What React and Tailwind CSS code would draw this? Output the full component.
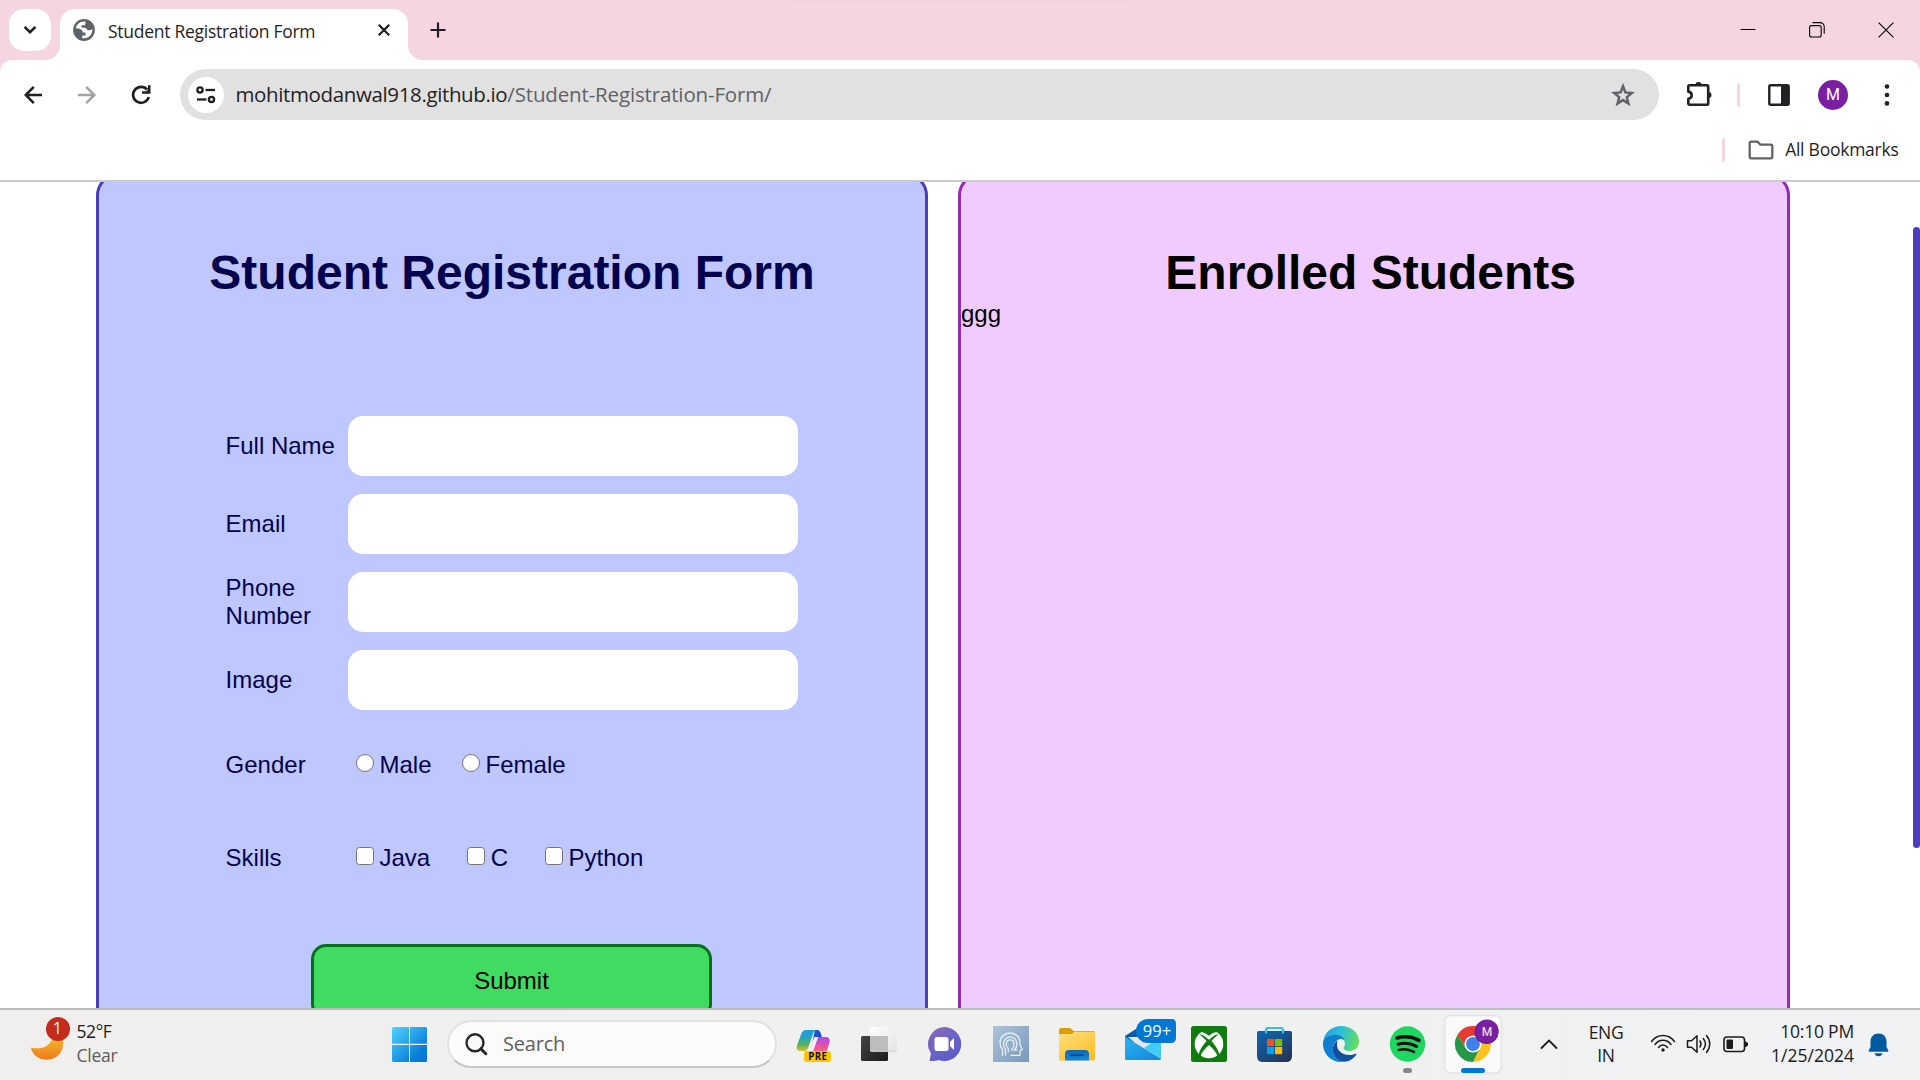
import React from "react";

function Slot({ children, label }) {
  return (
    <div className="relative h-[70px] w-[66px] shrink-0" aria-label={label}>
      <svg width="66" height="70" viewBox="0 0 66 70" fill="none" overflow="visible">
        {children}
      </svg>
    </div>
  );
}

function TabStrip() {
  return (
    <div className="flex h-[60px] shrink-0 items-end bg-[linear-gradient(to_bottom,#f1cfde,#f6d5e3)] bg-[length:336px_3px] bg-[position:794px_0] bg-no-repeat pl-[9px] text-[#1f1f1f]">
      <button className="mb-[9px] flex h-[42px] w-[42px] items-center justify-center rounded-[15px] bg-white" aria-label="Search tabs">
        <svg width="14" height="10" viewBox="0 0 14 10" fill="none" stroke="#1f1f23" strokeWidth="2.6">
          <path d="M1.6 1.8 7 7.2l5.4-5.4" />
        </svg>
      </button>
      <div className="relative ml-[9px] flex h-[51px] w-[348px] items-center rounded-t-[15px] bg-white pl-[13px]">
        <div className="absolute bottom-0 -left-[15px] h-[15px] w-[15px] bg-[radial-gradient(circle_at_0_0,transparent_14.6px,white_15.4px)]" />
        <div className="absolute -right-[15px] bottom-0 h-[15px] w-[15px] bg-[radial-gradient(circle_at_100%_0,transparent_14.6px,white_15.4px)]" />
        <svg className="-mt-[9px]" width="22" height="22" viewBox="0 0 22 22">
          <circle cx="11" cy="11" r="10.9" fill="#5f6368" />
          <path d="M12.4 2.6C8 1.700 3.700 4.600 2.700 9.300c1.500-.1 2.700.1 3.900.5 1.900.7 3.200 2.100 3.300 3.600h2.600v3h-2.400c-.6 0-.9.400-.9.900v1.900c3.800.7 7.500-1.200 9.200-4.500.8-1.600 1.100-3.200.9-4.700-.7.900-1.900 1.300-3.200 1.300h-1.700c-.3-1.500-1.500-2.300-3.200-2.500l-2.700-.3V6.300h2.300c1 0 1.600-.6 1.600-1.600z" fill="#fff" />
        </svg>
        <span className="-mt-[7px] ml-[13px] w-[250px] text-[17.5px] leading-6 tracking-[-0.27px] whitespace-nowrap">Student Registration Form</span>
        <svg className="-mt-[9px] ml-[20px]" width="12" height="12" viewBox="0 0 12 12" fill="none" stroke="#1f1f1f" strokeWidth="2.2">
          <path d="M.8.8l10.400 10.400M11.200.8.8 11.200" />
        </svg>
      </div>
      <svg className="mb-[22px] ml-[22px]" width="16" height="16" viewBox="0 0 16 16" fill="none" stroke="#1f1f23" strokeWidth="2.200">
        <path d="M8 .5v15M.5 8h15" />
      </svg>
      <div className="mr-[26px] mb-[22px] ml-auto flex items-center gap-[53px]">
        <svg width="16" height="16" viewBox="0 0 16 16" stroke="#000" strokeWidth="1"><path d="M.5 7.500h15" /></svg>
        <svg width="16" height="16" viewBox="0 0 16 16" fill="none" stroke="#000" strokeWidth="1.100">
          <rect x=".6" y="3.600" width="11.600" height="11.400" rx="2" />
          <path d="M3.500.6h7.500a4 4 0 0 1 4.200 4.200v7" />
        </svg>
        <svg width="16" height="16" viewBox="0 0 16 16" fill="none" stroke="#000" strokeWidth="1.100"><path d="M.6.6l14.800 14.800M15.400.6.6 15.400" /></svg>
      </div>
    </div>
  );
}

function Toolbar() {
  return (
    <div className="shrink-0 bg-[#f6d5e3]">
      <div className="flex h-[120px] flex-col rounded-t-[12px] bg-white pt-[9px]">
        <div className="flex h-[51px] items-center pl-[24px]">
          <svg width="19" height="18" viewBox="0 0 19 18" fill="none" stroke="#1f1f23" strokeWidth="2.500">
            <path d="M18 9H1.800M9.800.9 1.700 9l8.100 8.100" />
          </svg>
          <svg className="ml-[35px]" width="19" height="18" viewBox="0 0 19 18" fill="none" stroke="#a3a3a3" strokeWidth="2.500">
            <path d="M0 9h16.200M8.200.9 16.300 9l-8.100 8.100" />
          </svg>
          <svg className="ml-[34px]" width="20" height="20" viewBox="0 0 20 20">
            <path d="M16.200 4.600A8 8 0 1 0 17.800 12" fill="none" stroke="#1f1f23" strokeWidth="2.700" />
            <path d="M19.500.3v8.500H11V6.300h4.500l1.500-1.500V.3z" fill="#1f1f23" />
          </svg>
          <div className="ml-[29px] flex h-[51px] w-[1479px] items-center rounded-full bg-[#e1e1e1] pl-[8px]">
            <div className="flex h-[36px] w-[36px] items-center justify-center rounded-full bg-white">
              <svg width="20" height="18" viewBox="0 0 20 18" fill="none" stroke="#1f1f23" strokeWidth="2.300">
                <circle cx="4" cy="4" r="2.600" /><path d="M9.500 4H19" />
                <circle cx="15.500" cy="13.500" r="2.600" /><path d="M1 13.500h9.500" />
              </svg>
            </div>
            <div className="-mt-[2px] ml-[11.5px] text-[20.5px] leading-7 whitespace-nowrap">
              <span className="tracking-[-0.37px] text-[#1f1f1f]">mohitmodanwal918.github.io</span>
              <span className="tracking-[-0.15px] text-[#5f6266]">/Student-Registration-Form/</span>
            </div>
            <svg className="mr-[24px] ml-auto" width="24" height="24" viewBox="0 0 24 24" fill="none" stroke="#5f6368" strokeWidth="2.500">
              <path d="M12 3.200 14.400 9.400l6.400.5-5 4.200 1.600 6.400L12 17.100l-5.400 3.400 1.600-6.400-5-4.200 6.400-.5z" />
            </svg>
          </div>
          <svg className="-mt-px ml-[27px]" width="26" height="26" viewBox="0 0 26 26">
            <path d="M4.300 4.300H21q1.200 0 1.200 1.200v17q0 1.200-1.200 1.200H3.500q-1.200 0-1.200-1.200v-4.700c2.300-.3 3.400-1.700 3.400-3.600s-1.100-3.300-3.400-3.600V5.500q0-1.200 1.200-1.200z" fill="none" stroke="#202124" strokeWidth="2.600" strokeLinejoin="round" />
            <path d="M9.500 4a3 3 0 0 1 6 0zM22.500 11a3 3 0 0 1 0 6z" fill="#202124" />
          </svg>
          <div className="ml-[25px] h-[24px] w-[3px] rounded-full bg-[#f6d5e3]" />
          <svg className="ml-[28px]" width="22" height="22" viewBox="0 0 22 22">
            <rect x="1.300" y="1.300" width="19.400" height="19.400" rx="1.500" fill="none" stroke="#202124" strokeWidth="2.400" />
            <path d="M13 1h6.500q1.500 0 1.500 1.500v17q0 1.500-1.500 1.500H13z" fill="#202124" />
          </svg>
          <div className="ml-[28px] flex h-[30px] w-[30px] items-center justify-center rounded-full bg-[#7b1fa2] pt-px font-['Roboto'] text-[16px] leading-none text-white">M</div>
          <svg className="ml-[36px]" width="6" height="22" viewBox="0 0 6 22" fill="#202124">
            <circle cx="3" cy="2.500" r="2.300" /><circle cx="3" cy="11" r="2.300" /><circle cx="3" cy="19.400" r="2.300" />
          </svg>
        </div>
        <div className="mt-[6px] flex h-[48px] items-center justify-end pr-[21.5px] text-[#1f1f1f]">
          <div className="h-[24px] w-[3px] rounded-full bg-[#f6d5e3]" />
          <svg className="ml-[23px]" width="26" height="20" viewBox="0 0 26 20" fill="none" stroke="#5f6368" strokeWidth="2.300" strokeLinejoin="round">
            <path d="M3.200 1.700h6.300l3 3h10.300q1.500 0 1.500 1.500v10.600q0 1.500-1.500 1.500H3.200q-1.500 0-1.500-1.500V3.200q0-1.500 1.500-1.500z" />
          </svg>
          <span className="-mt-[2px] ml-[11px] text-[17.5px] leading-6 tracking-[-0.25px]">All Bookmarks</span>
        </div>
      </div>
      <div className="h-[2px] bg-[#cccccc]" />
    </div>
  );
}

function Field({ label }) {
  return (
    <div className="flex h-[60px] items-center">
      <span className="w-[110px] pl-[0.6px] leading-7">{label}</span>
      <input className="ml-[13px] h-[60px] w-[450px] rounded-[15px] bg-white px-4 outline-none" aria-label={label} />
    </div>
  );
}

function Choice({ round, text }) {
  return (
    <label className="flex items-center">
      <span className={round ? "-mt-[4px] h-[18px] w-[18px] rounded-full border-[1.5px] border-[#767676] bg-white" : "-mt-[4px] h-[18px] w-[18px] rounded-[3.5px] border-[1.5px] border-[#767676] bg-white"} />
      <span className="ml-[5.500px]">{text}</span>
    </label>
  );
}

function Page() {
  return (
    <div className="flex h-[826px] shrink-0 overflow-hidden bg-white font-['Liberation_Sans',Arial,sans-serif] text-[24px] leading-7">
      <section className="-mt-[9px] ml-[96px] h-[960px] w-[832px] rounded-[22.5px] border-[3px] border-[#4b3dbf] bg-[#bfc7ff] pt-[69px] text-[#04004d]">
        <h1 className="text-center text-[48px] leading-[55px] font-bold">Student Registration Form</h1>
        <div className="mt-[116px] ml-[126px] flex flex-col gap-[18px]">
          <Field label="Full Name" />
          <Field label="Email" />
          <Field label="Phone Number" />
          <Field label="Image" />
        </div>
        <div className="mt-[41px] ml-[126px] flex h-7 items-center">
          <span className="mr-[8px] w-[123px] pl-[0.6px]">Gender</span>
          <div className="flex gap-[30.5px]">
            <Choice round text="Male" />
            <Choice round text="Female" />
          </div>
        </div>
        <div className="mt-[65px] ml-[126px] flex h-7 items-center">
          <span className="mr-[8px] w-[123px] pl-[0.6px]">Skills</span>
          <div className="flex gap-[37px]">
            <Choice text="Java" />
            <Choice text="C" />
            <Choice text="Python" />
          </div>
        </div>
        <button className="mt-[72px] ml-[212px] block h-[75px] w-[401px] rounded-[15px] border-[3px] border-[#05701c] bg-[#40db61] pb-[1px] text-black">Submit</button>
      </section>
      <section className="-mt-[9px] ml-[30px] h-[960px] w-[832px] rounded-[22.5px] border-[3px] border-[#932bb6] bg-[#f0cbff] pt-[69px] text-black">
        <h1 className="pr-[6.600px] text-center text-[48px] leading-[55px] font-bold">Enrolled Students</h1>
        <p>ggg</p>
      </section>
      <div className="mt-[45px] ml-auto h-[621px] w-[7px] rounded-[4px] bg-[#4b3dbf]" />
    </div>
  );
}

function Weather() {
  return (
    <div className="flex w-[392px] items-center pl-[30px]">
      <div className="relative h-[70px] w-[46.5px]">
        <svg width="47" height="70" viewBox="0 0 47 70">
          <defs>
            <linearGradient id="moon" x1="0" y1="0" x2="0" y2="1"><stop offset="0" stopColor="#f2b72c" /><stop offset="1" stopColor="#ee7a1c" /></linearGradient>
          </defs>
          <path d="M.8 37.500C11 40 19.500 37 22.500 28L33 29.500C35 40 28 49.700 17 49.700 9 49.700 2.500 45.500.8 37.500z" fill="url(#moon)" />
        </svg>
        <span className="absolute top-[7px] left-[15.500px] flex h-[24px] w-[24px] items-center justify-center rounded-full bg-[#c42b1c] text-[15.5px] leading-none text-white">1</span>
      </div>
      <div className="-mt-[4px] flex flex-col text-[17.5px] leading-6">
        <span className="tracking-[-0.4px] text-[#1b1b1b]">52°F</span>
        <span className="tracking-[-0.25px] text-[#5d5d5d]">Clear</span>
      </div>
    </div>
  );
}

function Taskbar() {
  return (
    <div className="flex h-[72px] shrink-0 items-center overflow-hidden border-t-2 border-[#bdbdbd] bg-[linear-gradient(to_right,#f0efee,#eff0ef_60%,#f0f2f4)] text-[#1b1b1b]">
      <Weather />
      <svg width="36" height="36" viewBox="0 0 36 36">
        <defs>
          <linearGradient id="win" x1="0" y1="0" x2="35" y2="35" gradientUnits="userSpaceOnUse"><stop offset="0" stopColor="#4fd4ff" /><stop offset=".75" stopColor="#0a7fda" /><stop offset="1" stopColor="#0074d4" /></linearGradient>
        </defs>
        <path d="M1.500 0H17V16.800H0V1.500Q0 0 1.500 0zM18 0h15.500Q35 0 35 1.500v15.300H18zM0 18h17v16.900H1.500Q0 34.900 0 33.400zM18 18h17v15.400q0 1.500-1.500 1.500H18z" fill="url(#win)" />
      </svg>
      <div className="-mt-[2px] ml-[19px] flex h-[48px] w-[330px] items-center rounded-full border-2 border-[#e3e2e2] border-b-[#c6c6c5] bg-[#fbfbfa] pl-[16px]">
        <svg width="23" height="23" viewBox="0 0 23 23" fill="none" stroke="#262626" strokeWidth="2.400">
          <circle cx="10" cy="9.800" r="8.500" /><path d="m15.800 15.700 5 5" strokeWidth="3" strokeLinecap="round" />
        </svg>
        <span className="ml-[15px] text-[20px] leading-7 tracking-[-0.2px] text-[#5f5f5f]">Search</span>
      </div>
      <div className="ml-[3px] flex">
        <Slot label="Copilot">
          <defs>
            <linearGradient id="cp1" x1="0" y1="0" x2="0" y2="1"><stop offset="0" stopColor="#1b9de2" /><stop offset=".35" stopColor="#2aa3c0" /><stop offset=".7" stopColor="#58b05c" /><stop offset="1" stopColor="#e0c52a" /></linearGradient>
            <linearGradient id="cp2" x1="0" y1="0" x2="0" y2="1"><stop offset="0" stopColor="#a54df0" /><stop offset=".5" stopColor="#e052a8" /><stop offset="1" stopColor="#ff6a6f" /></linearGradient>
          </defs>
          <path d="M35 20h2c2 0 3 1 3.600 3l1.400 4h-7l-3 7z" fill="#1a50c8" />
          <path d="M26 20h11c-2 0-3.200 1.500-4 4l-5 14c-1 2.500-2 3-4 3h-4c-3 0-4-2.500-3-5.500l4-11c1-3 2.500-4.500 5-4.500z" fill="url(#cp1)" />
          <path d="M38 27h8c3 0 4.500 2.500 3.500 5.500L46 43H29c2 0 3.500-1 4.300-3.500z" fill="url(#cp2)" />
          <path d="M34.500 27H38l-5 14.500h-5z" fill="#f3edf5" />
          <rect x="24" y="41" width="27" height="11" rx="3" fill="#ffc400" />
          <text x="37.800" y="49.800" textAnchor="middle" fontFamily="Open Sans, sans-serif" fontWeight="700" fontSize="9.800" letterSpacing=".4" fill="#151000">PRE</text>
        </Slot>
        <Slot label="Task view">
          <defs>
            <linearGradient id="tv" x1="0" y1="0" x2="1" y2="1"><stop offset="0" stopColor="#454545" /><stop offset="1" stopColor="#1c1c1c" /></linearGradient>
            <linearGradient id="tw" x1="0" y1="0" x2="1" y2="1"><stop offset="0" stopColor="#fff" stopOpacity=".95" /><stop offset="1" stopColor="#e2e2e2" stopOpacity=".8" /></linearGradient>
          </defs>
          <rect x="15" y="26" width="27" height="25" rx="1.500" fill="url(#tv)" />
          <rect x="24" y="17" width="27" height="24.500" rx="1.500" fill="url(#tw)" />
          <path d="M24 26h18v15.500H25.500q-1.500 0-1.500-1.500z" fill="#bdbdbd" />
          <path d="M25 41.200h25" stroke="#cfcfcf" />
        </Slot>
        <Slot label="Chat">
          <defs><linearGradient id="ch" x1=".2" y1="0" x2=".8" y2="1"><stop offset="0" stopColor="#8868b8" /><stop offset=".5" stopColor="#6a64c8" /><stop offset="1" stopColor="#5a5ac8" /></linearGradient></defs>
          <path d="M32.500 17a17 17 0 1 1-6 33c-2.500.8-5.500 1.200-9 1l1.500-7.500A17 17 0 0 1 32.500 17z" fill="url(#ch)" />
          <rect x="22.500" y="27" width="14" height="14" rx="2.500" fill="#fff" />
          <path d="m38 32 4-4v12l-4-4z" fill="#fff" />
        </Slot>
        <Slot label="Profile head">
          <defs><linearGradient id="hd" x1="0" y1="0" x2="1" y2="1"><stop offset="0" stopColor="#adc4d8" /><stop offset="1" stopColor="#7898ba" /></linearGradient></defs>
          <rect x="15" y="16" width="36" height="36" fill="url(#hd)" />
          <g stroke="#e6eef6" strokeWidth="1.300" fill="none" strokeLinejoin="round">
            <path d="M24.500 46V39.500c-1.800-2-2.500-4.300-2.500-7 0-5.500 4.500-9.500 10-9.500 5.800 0 10 4 10 9.500v2.500l2.500 4.500-2.300.8-.3 5h-9.500" />
            <path d="M27.500 45.500v-6c-1.200-1.300-2-3.200-2-5.500 0-4.200 3-7.200 6.700-7.200 3.800 0 6.700 3 6.700 7.200 0 2.500-1 4.600-2.700 6h3" />
            <path d="M30.300 42.300v-3.600c-1.300-1-2-2.500-2-4.500 0-2.600 1.700-4.400 3.900-4.400s3.900 1.800 3.900 4.400c0 2-.8 3.500-2 4.500v2" />
          </g>
        </Slot>
        <Slot label="File Explorer">
          <defs><linearGradient id="fd" x1="0" y1="0" x2=".7" y2="1"><stop offset="0" stopColor="#ffe080" /><stop offset="1" stopColor="#fcbf2a" /></linearGradient><linearGradient id="fb" x1="0" y1="0" x2="0" y2="1"><stop offset="0" stopColor="#0a68b8" /><stop offset="1" stopColor="#1689dc" /></linearGradient></defs>
          <path d="M15 19.500q0-1.500 1.500-1.500h9.700l3.500 3h19.800q1.500 0 1.500 1.500V27H15z" fill="#dd9d0a" />
          <path d="M15 24h13l2-2.200h19.500q1.500 0 1.500 1.500V49q0 1.500-1.500 1.500h-33Q15 50.500 15 49z" fill="url(#fd)" />
          <path d="M21 50.500V44q0-4 4-4h16q4 0 4 4v6.500z" fill="url(#fb)" />
          <path d="M25.500 45.200h14" stroke="#084a8c" strokeWidth="1.800" />
        </Slot>
        <Slot label="Mail">
          <defs><linearGradient id="ml" x1="0" y1="0" x2="1" y2="1"><stop offset="0" stopColor="#2ab4f2" /><stop offset="1" stopColor="#1483d8" /></linearGradient></defs>
          <path d="M15 26 33 14.500 51 26v6H15z" fill="#0c59a4" />
          <path d="M18 27h30v14H35z" fill="#e9e6e8" />
          <path d="M51 27v22L34 38z" fill="#3ecbf4" />
          <path d="M15 26.500 51 49q-.4 1-1.500 1h-33Q15 50 15 48.500z" fill="url(#ml)" />
          <path d="M38 9h24q4 0 4 5v14q0 5-5 5H38a12 12 0 0 1 0-24z" fill="#0078d4" />
          <text x="47" y="27" textAnchor="middle" fontFamily="Open Sans, sans-serif" fontSize="16.500" fill="#fff">99+</text>
        </Slot>
        <Slot label="Xbox">
          <rect x="15" y="16" width="36" height="36" rx="2.500" fill="#107c10" />
          <circle cx="33" cy="34" r="14.300" fill="#fff" />
          <path d="M24 22.500c2.800-1 6 .8 9 3.300 3-2.500 6.200-4.300 9-3.300-2.400-2.200-5.600-3.300-9-3.300s-6.600 1.100-9 3.300z" fill="#107c10" />
          <path d="M23.200 24.500c2.600-.6 6 1.500 9.800 5.300 3.800-3.800 7.200-5.900 9.800-5.300-2 1-4.700 3.300-7.300 6.600 4.200 4.800 7.400 10 7.600 13.300l-1.600 1.600c-1.200-3.500-4.500-7.500-8.500-11-4 3.500-7.300 7.500-8.500 11L22.900 44.400c.2-3.300 3.400-8.500 7.600-13.300-2.600-3.300-5.300-5.600-7.300-6.600z" fill="#107c10" />
        </Slot>
        <Slot label="Microsoft Store">
          <defs><linearGradient id="st" x1="0" y1="0" x2=".8" y2="1"><stop offset="0" stopColor="#0d67ae" /><stop offset=".5" stopColor="#18508c" /><stop offset="1" stopColor="#263455" /></linearGradient></defs>
          <path d="M15 22.500q0-1.500 1.500-1.500h32q1.500 0 1.500 1.500V46q0 6-6 6H21q-6 0-6-6z" fill="url(#st)" />
          <path d="M24 23.500V19.500q0-1.500 1.500-1.500h14q1.500 0 1.500 1.500v4" stroke="#38bdf0" strokeWidth="2.200" />
          <path d="M25 29h7.200v7.200H25z" fill="#f25022" /><path d="M33 29h7.200v7.200H33z" fill="#7fba00" />
          <path d="M25 37h7.200v7.200H25z" fill="#00a4ef" /><path d="M33 37h7.200v7.200H33z" fill="#ffb900" />
        </Slot>
        <Slot label="Edge">
          <defs>
            <linearGradient id="eg1" x1="0" y1=".2" x2="1" y2=".4"><stop offset="0" stopColor="#1f9ee0" /><stop offset=".5" stopColor="#2fc0d8" /><stop offset="1" stopColor="#62dc5c" /></linearGradient>
            <linearGradient id="eg2" x1="0" y1="0" x2=".6" y2="1"><stop offset="0" stopColor="#1478c8" /><stop offset="1" stopColor="#0a84d8" /></linearGradient>
          </defs>
          <path d="M15.300 31C16.500 22.500 24 16 33 16c10.500 0 18 7 18 15.500 0 6-4.300 9.500-9.500 9.500-4 0-6-1.500-6-3 0-1.200 1.500-1.800 1.500-4.300 0-4-4-7.700-9.700-7.700-5 0-9 1.500-12 5z" fill="url(#eg1)" />
          <path d="M15.200 31c3-4 7-6.200 12-6.200 4.800 0 8.300 2.500 9.400 5.700-1.100-1-2.400-1.500-3.800-1.500-3.800 0-8 4.500-8 10.500 0 6 4.700 11.800 10.700 12.400-.8.100-1.700.1-2.500.1-10 0-18-8-18-18z" fill="url(#eg2)" />
          <path d="M29.500 30.500c-3 2-4.700 5-4.700 9 0 6.500 5 12.300 11.500 12.300 5 0 9.700-3.200 12-7.200.4-.8-.2-1.300-.9-.9-1.500.8-3.700 1.400-6.200 1.400-7 0-12.200-4.500-12.200-10 0-1.600.2-3.200.5-4.600z" fill="#124f9c" />
        </Slot>
        <Slot label="Spotify">
          <circle cx="33.500" cy="34" r="17.700" fill="#1ed760" />
          <g stroke="#0b0f0c" strokeLinecap="round">
            <path d="M23 28c7-2 15.500-1.300 22 2.400" strokeWidth="3.600" />
            <path d="M24 34.200c6-1.700 13-1 18.500 2.200" strokeWidth="3" />
            <path d="M24.800 39.900c5-1.300 10.500-.8 15.200 2" strokeWidth="2.500" />
          </g>
          <rect x="29" y="58" width="9" height="5" rx="2.500" fill="#868686" />
        </Slot>
        <Slot label="Chrome">
          <rect x="4.800" y="5.500" width="56.500" height="57.500" rx="6" fill="#fafafa" stroke="#e2e3e3" strokeWidth="1.500" />
          <path d="M33 26h16.100A18 18 0 0 1 33 52l7-14z" fill="#fcc31f" />
          <path d="M26 38 17.400 25A18 18 0 0 0 33 52l7-14z" fill="#279847" />
          <path d="M33 26h16.100A18 18 0 0 0 17.400 25L26 38z" fill="#e53b30" />
          <circle cx="33" cy="34" r="8.600" fill="#fff" /><circle cx="33" cy="34" r="6.900" fill="#3f7fee" />
          <circle cx="46.500" cy="22" r="12" fill="#6a1796" /><circle cx="47" cy="21" r="11.500" fill="#7b1fa2" />
          <text x="47" y="25.500" textAnchor="middle" fontFamily="Roboto, sans-serif" fontWeight="500" fontSize="12" fill="#eadcf0">M</text>
          <rect x="21" y="58" width="24" height="5" rx="2.500" fill="#0078d4" />
        </Slot>
      </div>
      <svg className="-mt-[2px] ml-[34px]" width="18" height="11" viewBox="0 0 18 11" fill="none" stroke="#1b1b1b" strokeWidth="1.800" strokeLinecap="round"><path d="m1.500 9 7.500-7.500L16.500 9" /></svg>
      <div className="-mt-[2px] ml-[29px] flex w-[38px] flex-col text-center text-[17.5px] leading-[23px] tracking-[-0.4px]"><span>ENG</span><span>IN</span></div>
      <svg className="-mt-[3px] ml-[25px]" width="26" height="19" viewBox="0 0 26 19" fill="none" stroke="#1b1b1b" strokeWidth="1.500" strokeLinecap="round">
        <path d="M1.500 7.500C7.500-.6 18.500-.6 24.500 7.500M5 10.500c4.300-5.600 11.700-5.600 16 0M8.500 13.500c2.600-3.200 6.400-3.200 9 0" />
        <circle cx="13" cy="16" r="1.700" fill="#1b1b1b" stroke="none" />
      </svg>
      <svg className="-mt-[2px] ml-[10px]" width="26" height="22" viewBox="0 0 26 22" fill="none" stroke="#1b1b1b" strokeWidth="1.500" strokeLinecap="round" strokeLinejoin="round">
        <path d="M1.500 7.800v6.500h4l5.500 5V2.800l-5.500 5zM14 8c1.300 2 1.300 4 0 6M17.300 5.500c2.700 3.500 2.700 7.500 0 11M20.500 2.500c4.300 5.200 4.300 11.800 0 17" />
      </svg>
      <svg className="-mt-[2px] ml-[11px]" width="26" height="17" viewBox="0 0 26 17">
        <rect x="1" y="1" width="20.500" height="14.500" rx="3" fill="none" stroke="#1b1b1b" strokeWidth="1.600" />
        <rect x="3.500" y="3.500" width="6.500" height="9.500" rx="1.200" fill="#1b1b1b" />
        <path d="M22 5.500h.8l2.200 1.500v2.600l-2.200 1.500H22z" fill="#1b1b1b" />
      </svg>
      <div className="-mt-[4px] ml-auto flex flex-col text-right text-[17.5px] leading-6"><span className="tracking-[-0.2px]">10:10 PM</span><span>1/25/2024</span></div>
      <svg className="-mt-px mr-[31.5px] ml-[13.5px]" width="21" height="24" viewBox="0 0 21 24" fill="#005a9e">
        <path d="M10.500.5c4.700 0 8 3.500 8 8V14l1.700 3.300c.4.800 0 1.500-.9 1.500H1.700c-.9 0-1.300-.7-.9-1.500L2.500 14V8.500c0-4.500 3.300-8 8-8zM6.500 20.300h8c-.5 1.800-2 3-4 3s-3.500-1.200-4-3z" />
      </svg>
    </div>
  );
}

export default function App() {
  return (
    <div className="flex h-[1080px] w-[1920px] flex-col overflow-hidden bg-[#f6d5e3] font-['Open_Sans','Noto_Sans',sans-serif]">
      <TabStrip />
      <Toolbar />
      <Page />
      <Taskbar />
    </div>
  );
}
